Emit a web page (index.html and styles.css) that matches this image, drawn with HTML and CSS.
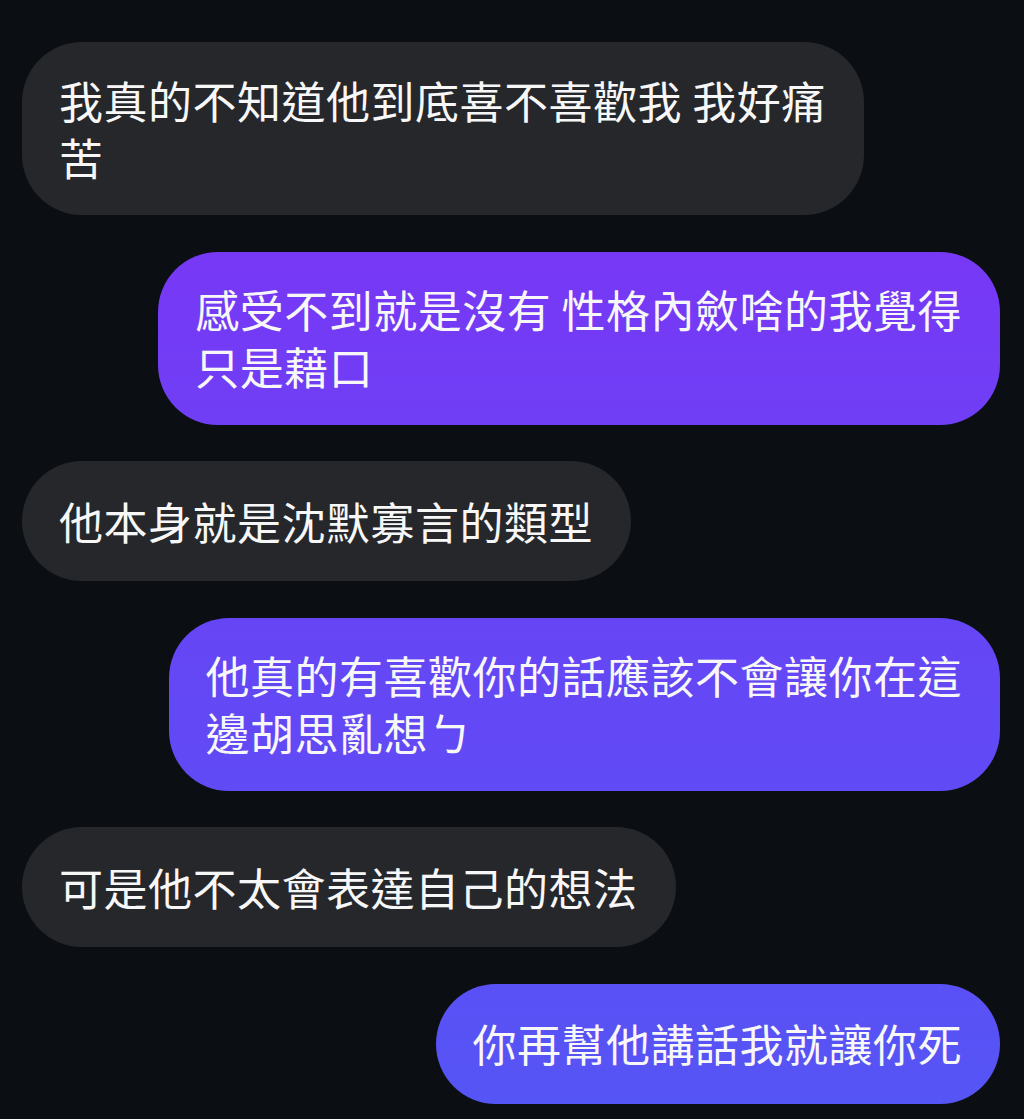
FILE: index.html
```html
<!DOCTYPE html>
<html lang="zh-Hant">
<head>
<meta charset="utf-8">
<title>Chat</title>
<link rel="stylesheet" href="styles.css">
</head>
<body>
<main class="chat">
  <div class="row in"><div class="bubble gray">我真的不知道他到底喜不喜歡我 我好痛<br>苦</div></div>
  <div class="row out"><div class="bubble purple">感受不到就是沒有 性格內斂啥的我覺得<br>只是藉口</div></div>
  <div class="row in"><div class="bubble gray single">他本身就是沈默寡言的類型</div></div>
  <div class="row out"><div class="bubble purple">他真的有喜歡你的話應該不會讓你在這<br>邊胡思亂想ㄅ</div></div>
  <div class="row in"><div class="bubble gray single">可是他不太會表達自己的想法</div></div>
  <div class="row out"><div class="bubble purple single">你再幫他講話我就讓你死</div></div>
</main>
</body>
</html>
```

FILE: styles.css
```css
html, body {
  margin: 0;
  padding: 0;
  background: #0b0e12;
}

body {
  font-family: "Noto Sans CJK TC", "Noto Sans CJK SC", "Noto Sans", sans-serif;
  color: #f7f7f8;
  height: 1119px;
  overflow: hidden;
}

.chat {
  display: flex;
  flex-direction: column;
  gap: 36.5px;
  padding: 42px 24px 0 22px;
}

.row {
  display: flex;
}

.row.in {
  justify-content: flex-start;
}

.row.out {
  justify-content: flex-end;
}

.bubble {
  font-size: 44px;
  font-weight: 400;
  letter-spacing: 0.5px;
  line-height: 57px;
  padding: 29.5px 38px 29.5px 37px;
  border-radius: 60px;
  white-space: nowrap;
}

.bubble.single {
  padding-top: 31.5px;
  padding-bottom: 31.5px;
}

.gray {
  background: #25272b;
}

.purple {
  background: linear-gradient(180deg, #7e35f5 0%, #7639f5 25%, #6447f5 60%, #5555f5 100%);
  background-attachment: fixed;
}
```
